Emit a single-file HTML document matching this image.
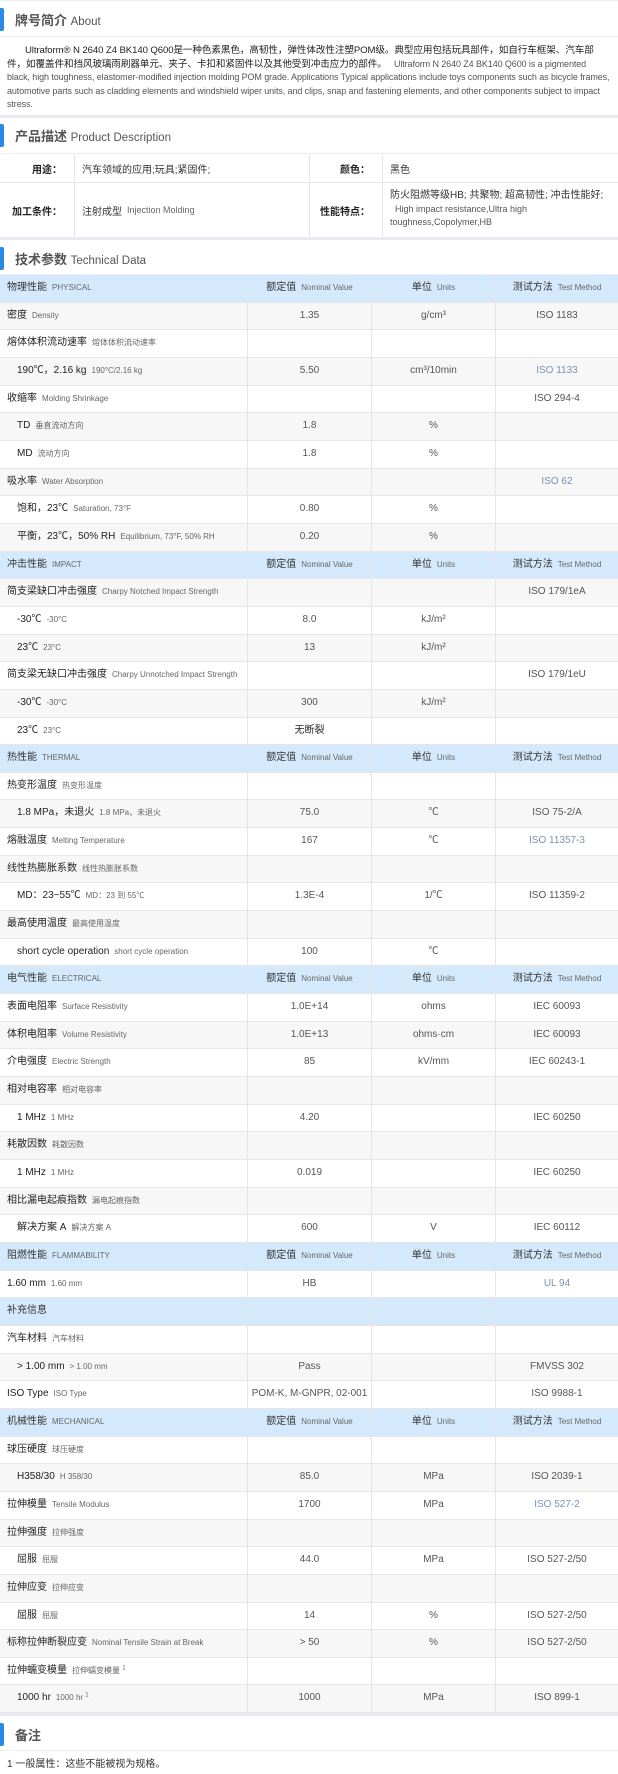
<!DOCTYPE html>
<html><head><meta charset="utf-8"><style>
*{margin:0;padding:0;box-sizing:border-box}
body{width:618px;height:1768px;overflow:hidden;background:#fff;font-family:"Liberation Sans","Noto Sans CJK SC",sans-serif;color:#333}
.sec{position:absolute;left:0;width:618px}
.title{height:37px;border-top:1px solid #eceef2;border-bottom:1px solid #eceef2;position:relative}
.title:before{content:"";position:absolute;left:0;top:7px;width:4px;height:23px;background:#2b8ae6;border-radius:0 2px 2px 0}
.title span{position:absolute;left:15px;top:9px;font-size:13px;color:#555;font-weight:bold}
.title span small{font-weight:normal;font-size:11.5px}
.about{padding:7px 7px 0 7px;font-size:9px;line-height:13.5px;color:#555;letter-spacing:-0.1px}
.about b{color:#222;font-weight:normal;font-size:9.6px}
.sep{height:3px;background:#e9eaef}
.pd{position:absolute;left:0;width:618px;font-size:10px}
.pd div{position:absolute;border-right:1px solid #e6e6e6;border-bottom:1px solid #e6e6e6;display:flex;align-items:center}
.lab{justify-content:flex-end;padding-right:12px;font-weight:bold;color:#222}
.val{padding-left:7px;color:#333}
.row{height:27.67px;display:flex;border-bottom:1px solid #e6e6e6;font-size:10px;color:#555;white-space:nowrap}
.row>div{display:block;line-height:26.6px;height:26.67px;border-right:1px solid #e6e6e6;text-align:center}
.row>div:nth-child(1){width:248px;padding-left:7px;color:#222;text-align:left}
.row>div:nth-child(2){width:124px}
.row>div:nth-child(3){width:124px}
.row>div:nth-child(4){width:122px;border-right:none}
.row:nth-child(even){background:#f7f7f7}
.row.h{background:#d5e9fc!important}
.row.h>div{color:#333}
.e{font-size:8px;color:#666;margin-left:5px}
.ind{padding-left:17px!important}
.lk{color:#7a92b4!important}
sup{font-size:6px;line-height:0}
</style></head><body>

<div class="sec" style="top:0">
 <div class="title"><span>牌号简介 <small>About</small></span></div>
 <div class="about" style="height:78px"><b>&nbsp;&nbsp;&nbsp;&nbsp;&nbsp;&nbsp;&nbsp;Ultraform® N 2640 Z4 BK140 Q600是一种色素黑色，高韧性，弹性体改性注塑POM级。典型应用包括玩具部件，如自行车框架、汽车部件，如覆盖件和挡风玻璃雨刷器单元、夹子、卡扣和紧固件以及其他受到冲击应力的部件。</b>&nbsp;&nbsp; Ultraform N 2640 Z4 BK140 Q600 is a pigmented black, high toughness, elastomer-modified injection molding POM grade. Applications Typical applications include toys components such as bicycle frames, automotive parts such as cladding elements and windshield wiper units, and clips, snap and fastening elements, and other components subject to impact stress.</div>
 <div class="sep"></div>
</div>

<div class="sec" style="top:117px">
 <div class="title" style="border-top:none"><span>产品描述 <small>Product Description</small></span></div>
</div>
<div class="pd" style="top:155px;height:85px">
 <div class="lab" style="left:0;top:0;width:75px;height:28px">用途：</div>
 <div class="val" style="left:75px;top:0;width:235px;height:28px">汽车领域的应用;玩具;紧固件;</div>
 <div class="lab" style="left:310px;top:0;width:73px;height:28px">颜色：</div>
 <div class="val" style="left:383px;top:0;width:235px;height:28px;border-right:none">黑色</div>
 <div class="lab" style="left:0;top:28px;width:75px;height:54px;border-bottom:none">加工条件：</div>
 <div class="val" style="left:75px;top:28px;width:235px;height:54px;border-bottom:none">注射成型 <span class="e" style="font-size:9px">Injection Molding</span></div>
 <div class="lab" style="left:310px;top:28px;width:73px;height:54px;border-bottom:none">性能特点：</div>
 <div class="val" style="left:383px;top:28px;width:235px;height:54px;border-right:none;border-bottom:none;line-height:13.5px;display:block;padding-top:6px">防火阻燃等级HB; 共聚物; 超高韧性; 冲击性能好;<br><span style="font-size:9px;color:#555">&nbsp; High impact resistance,Ultra high<br>toughness,Copolymer,HB</span></div>
</div>
<div class="sec" style="top:237px"><div class="sep"></div></div>
<div class="sec" style="top:240px">
 <div class="title" style="border-top:none;height:35px"><span>技术参数 <small>Technical Data</small></span></div>
</div>

<div class="sec" style="top:275px">
<div class="row h"><div>物理性能<span class="e">PHYSICAL</span></div><div>额定值<span class="e">Nominal Value</span></div><div>单位<span class="e">Units</span></div><div>测试方法<span class="e">Test Method</span></div></div>
<div class="row"><div>密度<span class="e">Density</span></div><div>1.35</div><div>g/cm³</div><div>ISO 1183</div></div>
<div class="row"><div>熔体体积流动速率<span class="e">熔体体积流动速率</span></div><div></div><div></div><div></div></div>
<div class="row"><div class="ind">190℃，2.16 kg<span class="e">190°C/2.16 kg</span></div><div>5.50</div><div>cm³/10min</div><div class="lk">ISO 1133</div></div>
<div class="row"><div>收缩率<span class="e">Molding Shrinkage</span></div><div></div><div></div><div>ISO 294-4</div></div>
<div class="row"><div class="ind">TD<span class="e">垂直流动方向</span></div><div>1.8</div><div>%</div><div></div></div>
<div class="row"><div class="ind">MD<span class="e">流动方向</span></div><div>1.8</div><div>%</div><div></div></div>
<div class="row"><div>吸水率<span class="e">Water Absorption</span></div><div></div><div></div><div class="lk">ISO 62</div></div>
<div class="row"><div class="ind">饱和，23℃<span class="e">Saturation, 73°F</span></div><div>0.80</div><div>%</div><div></div></div>
<div class="row"><div class="ind">平衡，23℃，50% RH<span class="e">Equilibrium, 73°F, 50% RH</span></div><div>0.20</div><div>%</div><div></div></div>
<div class="row h"><div>冲击性能<span class="e">IMPACT</span></div><div>额定值<span class="e">Nominal Value</span></div><div>单位<span class="e">Units</span></div><div>测试方法<span class="e">Test Method</span></div></div>
<div class="row"><div>简支梁缺口冲击强度<span class="e">Charpy Notched Impact Strength</span></div><div></div><div></div><div>ISO 179/1eA</div></div>
<div class="row"><div class="ind">-30℃<span class="e">-30°C</span></div><div>8.0</div><div>kJ/m²</div><div></div></div>
<div class="row"><div class="ind">23℃<span class="e">23°C</span></div><div>13</div><div>kJ/m²</div><div></div></div>
<div class="row"><div>简支梁无缺口冲击强度<span class="e">Charpy Unnotched Impact Strength</span></div><div></div><div></div><div>ISO 179/1eU</div></div>
<div class="row"><div class="ind">-30℃<span class="e">-30°C</span></div><div>300</div><div>kJ/m²</div><div></div></div>
<div class="row"><div class="ind">23℃<span class="e">23°C</span></div><div style="color:#222">无断裂</div><div></div><div></div></div>
<div class="row h"><div>热性能<span class="e">THERMAL</span></div><div>额定值<span class="e">Nominal Value</span></div><div>单位<span class="e">Units</span></div><div>测试方法<span class="e">Test Method</span></div></div>
<div class="row"><div>热变形温度<span class="e">热变形温度</span></div><div></div><div></div><div></div></div>
<div class="row"><div class="ind">1.8 MPa，未退火<span class="e">1.8 MPa，未退火</span></div><div>75.0</div><div>℃</div><div>ISO 75-2/A</div></div>
<div class="row"><div>熔融温度<span class="e">Melting Temperature</span></div><div>167</div><div>℃</div><div class="lk">ISO 11357-3</div></div>
<div class="row"><div>线性热膨胀系数<span class="e">线性热膨胀系数</span></div><div></div><div></div><div></div></div>
<div class="row"><div class="ind">MD：23~55℃<span class="e">MD：23 到 55℃</span></div><div>1.3E-4</div><div>1/℃</div><div>ISO 11359-2</div></div>
<div class="row"><div>最高使用温度<span class="e">最高使用温度</span></div><div></div><div></div><div></div></div>
<div class="row"><div class="ind">short cycle operation<span class="e">short cycle operation</span></div><div>100</div><div>℃</div><div></div></div>
<div class="row h"><div>电气性能<span class="e">ELECTRICAL</span></div><div>额定值<span class="e">Nominal Value</span></div><div>单位<span class="e">Units</span></div><div>测试方法<span class="e">Test Method</span></div></div>
<div class="row"><div>表面电阻率<span class="e">Surface Resistivity</span></div><div>1.0E+14</div><div>ohms</div><div>IEC 60093</div></div>
<div class="row"><div>体积电阻率<span class="e">Volume Resistivity</span></div><div>1.0E+13</div><div>ohms·cm</div><div>IEC 60093</div></div>
<div class="row"><div>介电强度<span class="e">Electric Strength</span></div><div>85</div><div>kV/mm</div><div>IEC 60243-1</div></div>
<div class="row"><div>相对电容率<span class="e">相对电容率</span></div><div></div><div></div><div></div></div>
<div class="row"><div class="ind">1 MHz<span class="e">1 MHz</span></div><div>4.20</div><div></div><div>IEC 60250</div></div>
<div class="row"><div>耗散因数<span class="e">耗散因数</span></div><div></div><div></div><div></div></div>
<div class="row"><div class="ind">1 MHz<span class="e">1 MHz</span></div><div>0.019</div><div></div><div>IEC 60250</div></div>
<div class="row"><div>相比漏电起痕指数<span class="e">漏电起痕指数</span></div><div></div><div></div><div></div></div>
<div class="row"><div class="ind">解决方案 A<span class="e">解决方案 A</span></div><div>600</div><div>V</div><div>IEC 60112</div></div>
<div class="row h"><div>阻燃性能<span class="e">FLAMMABILITY</span></div><div>额定值<span class="e">Nominal Value</span></div><div>单位<span class="e">Units</span></div><div>测试方法<span class="e">Test Method</span></div></div>
<div class="row"><div>1.60 mm<span class="e">1.60 mm</span></div><div>HB</div><div></div><div class="lk">UL 94</div></div>
<div class="row h"><div>补充信息</div><div></div><div></div><div></div></div>
<div class="row"><div>汽车材料<span class="e">汽车材料</span></div><div></div><div></div><div></div></div>
<div class="row"><div class="ind">&gt; 1.00 mm<span class="e">&gt; 1.00 mm</span></div><div>Pass</div><div></div><div>FMVSS 302</div></div>
<div class="row"><div>ISO Type<span class="e">ISO Type</span></div><div>POM-K, M-GNPR, 02-001</div><div></div><div>ISO 9988-1</div></div>
<div class="row h"><div>机械性能<span class="e">MECHANICAL</span></div><div>额定值<span class="e">Nominal Value</span></div><div>单位<span class="e">Units</span></div><div>测试方法<span class="e">Test Method</span></div></div>
<div class="row"><div>球压硬度<span class="e">球压硬度</span></div><div></div><div></div><div></div></div>
<div class="row"><div class="ind">H358/30<span class="e">H 358/30</span></div><div>85.0</div><div>MPa</div><div>ISO 2039-1</div></div>
<div class="row"><div>拉伸模量<span class="e">Tensile Modulus</span></div><div>1700</div><div>MPa</div><div class="lk">ISO 527-2</div></div>
<div class="row"><div>拉伸强度<span class="e">拉伸强度</span></div><div></div><div></div><div></div></div>
<div class="row"><div class="ind">屈服<span class="e">屈服</span></div><div>44.0</div><div>MPa</div><div>ISO 527-2/50</div></div>
<div class="row"><div>拉伸应变<span class="e">拉伸应变</span></div><div></div><div></div><div></div></div>
<div class="row"><div class="ind">屈服<span class="e">屈服</span></div><div>14</div><div>%</div><div>ISO 527-2/50</div></div>
<div class="row"><div>标称拉伸断裂应变<span class="e">Nominal Tensile Strain at Break</span></div><div>&gt; 50</div><div>%</div><div>ISO 527-2/50</div></div>
<div class="row"><div>拉伸蠕变模量<span class="e">拉伸蠕变模量 <sup>1</sup></span></div><div></div><div></div><div></div></div>
<div class="row"><div class="ind">1000 hr<span class="e">1000 hr <sup>1</sup></span></div><div>1000</div><div>MPa</div><div>ISO 899-1</div></div>
</div>

<div class="sec" style="top:1713px"><div class="sep"></div></div>
<div class="sec" style="top:1716px">
 <div class="title" style="border-top:none;height:35px"><span>备注</span></div>
 <div style="padding:4px 7px;font-size:10px;color:#333">1 一般属性：这些不能被视为规格。</div>
</div>
</body></html>
